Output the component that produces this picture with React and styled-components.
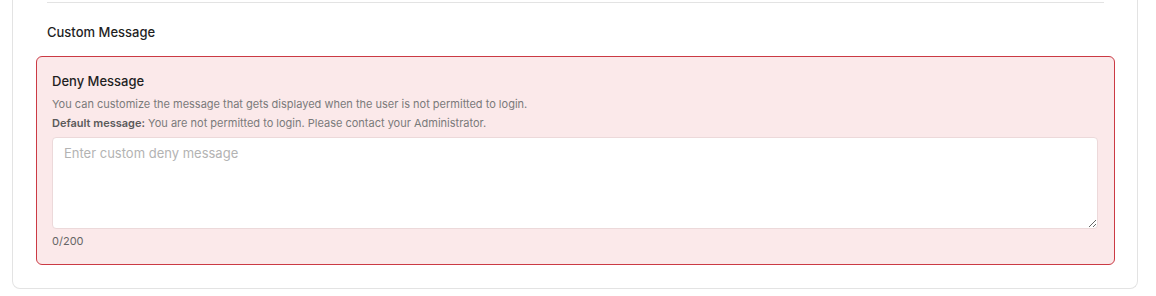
import React, { useState } from "react";
import styled, { createGlobalStyle } from "styled-components";

const GlobalStyle = createGlobalStyle`
  body {
    margin: 0;
    background: #ffffff;
    font-family: "Inter", "Noto Sans", sans-serif;
    color: #2b2b2b;
  }
`;

const MAX = 200;

const App = () => {
  const [message, setMessage] = useState("");

  return (
    <>
      <GlobalStyle />
      <Page>
        <Card>
          <Divider />
          <SectionTitle>Custom Message</SectionTitle>
          <DenyBox>
            <BoxTitle>Deny Message</BoxTitle>
            <Hint>
              You can customize the message that gets displayed when the user
              is not permitted to login.
            </Hint>
            <Hint>
              <strong>Default message:</strong> You are not permitted to login.
              Please contact your Administrator.
            </Hint>
            <MessageInput
              placeholder="Enter custom deny message"
              maxLength={MAX}
              value={message}
              onChange={(e) => setMessage(e.target.value)}
            />
            <Counter>
              {message.length}/{MAX}
            </Counter>
          </DenyBox>
        </Card>
      </Page>
    </>
  );
};

export default App;

const Page = styled.div`
  padding: 0 18px 0 12px;
  height: 296px;
  box-sizing: border-box;
`;

const Card = styled.div`
  border: 1px solid #e3e3e3;
  border-top: none;
  border-radius: 0 0 8px 8px;
  padding: 2px 22px 23px 23px;
`;

const Divider = styled.div`
  height: 1px;
  background: #e3e3e3;
  margin: 0 11px;
`;

const SectionTitle = styled.h3`
  margin: 19px 0 14px 11px;
  font-size: 13px;
  line-height: 20px;
  font-weight: 500;
  color: #1f1f1f;
`;

const DenyBox = styled.div`
  border: 1px solid #cb3a44;
  background: #fbe9ea;
  border-radius: 6px;
  padding: 14px 16px 15px 15px;
`;

const BoxTitle = styled.h4`
  margin: 0 0 4px;
  font-size: 13px;
  line-height: 20px;
  font-weight: 500;
  color: #1f1f1f;
`;

const Hint = styled.p`
  margin: 0;
  font-size: 11px;
  line-height: 19px;
  color: #7a7a7a;

  strong {
    font-weight: 600;
    color: #5a5a5a;
  }
`;

const MessageInput = styled.textarea`
  display: block;
  box-sizing: border-box;
  width: 100%;
  height: 92px;
  margin-top: 4px;
  padding: 6px 11px;
  border: 1px solid #ecd9da;
  border-radius: 4px;
  background: #ffffff;
  font-family: inherit;
  font-size: 13px;
  line-height: 18px;
  color: #2b2b2b;
  resize: vertical;
  outline: none;

  &::placeholder {
    color: #b3b3b3;
  }
`;

const Counter = styled.div`
  margin-top: 4px;
  font-size: 11px;
  line-height: 16px;
  color: #666666;
`;
